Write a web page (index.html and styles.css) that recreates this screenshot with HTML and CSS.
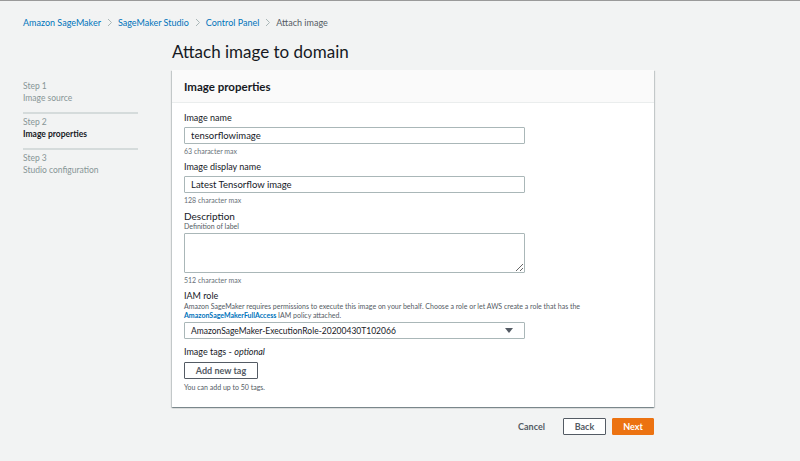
FILE: index.html
```html
<!DOCTYPE html>
<html lang="en">
<head>
<meta charset="utf-8">
<title>Attach image to domain</title>
<link rel="stylesheet" href="styles.css">
</head>
<body>
<nav class="breadcrumbs">
  <a class="crumb link">Amazon SageMaker</a>
  <span class="sep"><svg width="6" height="9" viewBox="0 0 6 9"><path d="M1 1l3.5 3.5L1 8" fill="none" stroke="#aab7b8" stroke-width="1"/></svg></span>
  <a class="crumb link">SageMaker Studio</a>
  <span class="sep"><svg width="6" height="9" viewBox="0 0 6 9"><path d="M1 1l3.5 3.5L1 8" fill="none" stroke="#aab7b8" stroke-width="1"/></svg></span>
  <a class="crumb link">Control Panel</a>
  <span class="sep"><svg width="6" height="9" viewBox="0 0 6 9"><path d="M1 1l3.5 3.5L1 8" fill="none" stroke="#aab7b8" stroke-width="1"/></svg></span>
  <span class="crumb current">Attach image</span>
</nav>
<div class="layout">
  <aside class="steps">
    <div class="step">
      <div class="step-num">Step 1</div>
      <div class="step-name">Image source</div>
    </div>
    <div class="step active">
      <div class="step-num">Step 2</div>
      <div class="step-name">Image properties</div>
    </div>
    <div class="step last">
      <div class="step-num">Step 3</div>
      <div class="step-name">Studio configuration</div>
    </div>
  </aside>
  <main class="content">
    <h1 class="title">Attach image to domain</h1>
    <section class="card">
      <header class="card-header">Image properties</header>
      <div class="card-body">
        <div class="field">
          <label class="label">Image name</label>
          <input class="input" type="text" value="tensorflowimage">
          <div class="hint">63 character max</div>
        </div>
        <div class="field">
          <label class="label">Image display name</label>
          <input class="input" type="text" value="Latest Tensorflow image">
          <div class="hint">128 character max</div>
        </div>
        <div class="field">
          <label class="label label-lg">Description</label>
          <div class="desc">Definition of label</div>
          <textarea class="textarea"></textarea>
          <div class="hint">512 character max</div>
        </div>
        <div class="field">
          <label class="label label-flush">IAM role</label>
          <div class="desc">Amazon SageMaker requires permissions to execute this image on your behalf. Choose a role or let AWS create a role that has the<br><a class="strong-link">AmazonSageMakerFullAccess</a> IAM policy attached.</div>
          <div class="select">
            <span>AmazonSageMaker-ExecutionRole-20200430T102066</span>
            <svg width="8" height="6" viewBox="0 0 8 6"><path d="M0 0h8L4 5z" fill="#545b64"/></svg>
          </div>
        </div>
        <div class="field tags">
          <label class="label">Image tags - <i>optional</i></label>
          <button class="btn btn-tag">Add new tag</button>
          <div class="hint hint-dark">You can add up to 50 tags.</div>
        </div>
      </div>
    </section>
    <div class="actions">
      <button class="btn-link">Cancel</button>
      <button class="btn btn-back">Back</button>
      <button class="btn btn-next">Next</button>
    </div>
  </main>
</div>
</body>
</html>
```

FILE: styles.css
```css
* { box-sizing: border-box; }
html, body { margin: 0; padding: 0; }
body {
  background: #f2f3f3;
  border-top: 1px solid #9a9a9a;
  font-family: "Lato", "Open Sans", sans-serif;
  color: #16191f;
  width: 800px;
  height: 461px;
  overflow: hidden;
}
.breadcrumbs {
  display: flex;
  align-items: center;
  height: 41px;
  padding-left: 23px;
  padding-top: 1px;
  font-size: 9px;
}
.crumb.link { color: #0073bb; }
.crumb.current { color: #545b64; }
.sep { display: flex; margin: 0 5px 0 6px; }

.layout {
  display: flex;
}
.steps {
  width: 172px;
  padding-left: 23px;
  padding-top: 39px;
}
.step {
  width: 115px;
  border-bottom: 2px solid #d5dbdb;
  padding-bottom: 8px;
  margin-bottom: 3px;
}
.step.last { border-bottom: none; }
.step-num, .step-name {
  font-size: 8.5px;
  line-height: 11.5px;
  color: #879596;
}
.step.active .step-name { color: #16191f; font-weight: 700; }

.content {
  width: 482px;
}
.title {
  margin: 0;
  font-weight: 400;
  font-size: 17px;
  line-height: 20px;
  height: 28px;
  color: #16191f;
}
.card {
  background: #fff;
  box-shadow: 0 1px 1px rgba(0,28,36,0.3), 1px 1px 1px rgba(0,28,36,0.15), -1px 1px 1px rgba(0,28,36,0.15);
}
.card-header {
  height: 33px;
  background: #fafafa;
  border-bottom: 1px solid #eaeded;
  padding-left: 12px;
  display: flex;
  align-items: center;
  font-size: 11.5px;
  font-weight: 700;
}
.card-body {
  padding: 9px 12px 15px 12px;
}
.field { display: flex; flex-direction: column; align-items: flex-start; margin-bottom: 5px; }
.field.tags { margin-top: 7px; margin-bottom: 0; }
.label {
  font-size: 9px;
  line-height: 12px;
  margin-bottom: 3px;
}
.label-lg { font-size: 10px; margin-bottom: 0; }
.label-flush { margin-bottom: 0; }
.label i { font-style: italic; }
.desc {
  font-size: 7px;
  line-height: 9px;
  color: #545b64;
  margin-bottom: 2px;
}
.strong-link { color: #0073bb; font-weight: 700; }
.hint {
  font-size: 7px;
  line-height: 10px;
  color: #687078;
  margin-top: 2px;
}
.hint-dark { color: #545b64; margin-top: 3px; }
.input, .select, .textarea {
  width: 341px;
  border: 1px solid #aab7b8;
  border-radius: 1px;
  background: #fff;
  font-family: inherit;
  color: #16191f;
  margin: 0;
}
.input {
  height: 17px;
  padding: 0 6px;
  font-size: 9.5px;
  outline: none;
}
.textarea {
  display: block;
  height: 40px;
  resize: vertical;
  outline: none;
}
.select {
  height: 17px;
  padding: 0 6px;
  font-size: 8.5px;
  display: flex;
  align-items: center;
  justify-content: space-between;
}
.select svg { margin-right: 5px; }
.btn {
  font-family: inherit;
  font-weight: 700;
  font-size: 9px;
  height: 17px;
  border-radius: 1px;
  padding: 0;
  margin: 0;
  cursor: pointer;
}
.btn-tag {
  width: 74px;
  background: #fff;
  border: 1px solid #545b64;
  color: #545b64;
  margin-top: 1px;
}
.actions {
  display: flex;
  justify-content: flex-end;
  align-items: center;
  margin-top: 11px;
  gap: 6px;
}
.btn-link {
  background: none;
  border: none;
  padding: 0;
  font-family: inherit;
  font-weight: 700;
  font-size: 9px;
  color: #545b64;
  margin-right: 12px;
}
.btn-back {
  width: 43px;
  background: #fff;
  border: 1px solid #545b64;
  color: #545b64;
}
.btn-next {
  width: 42px;
  background: #ec7211;
  border: 1px solid #ec7211;
  color: #fff;
}
```
